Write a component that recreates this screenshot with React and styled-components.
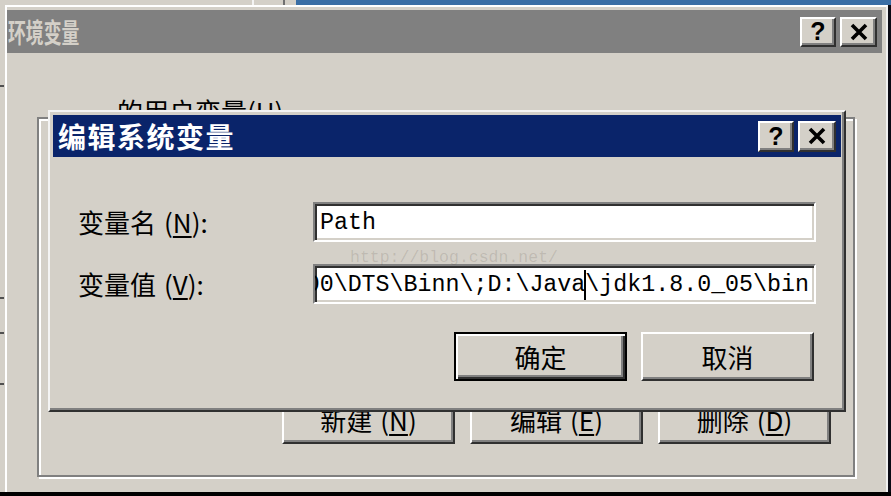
import React from 'react';
import styled, { createGlobalStyle } from 'styled-components';

const GlobalStyle = createGlobalStyle`
  html, body {
    margin: 0;
    padding: 0;
    background: #000;
  }
  body {
    width: 891px;
    height: 496px;
    overflow: hidden;
  }
  * {
    box-sizing: border-box;
  }
`;

const cjk = `"Noto Sans CJK SC", "Noto Sans", sans-serif`;
const mono = `"Liberation Mono", "DejaVu Sans Mono", monospace`;

// 背景（桌面和后面的窗口）
const Desktop = styled.div`
  width: 891px;
  height: 496px;
  display: flex;
  flex-direction: column;
  background: #d4d0c8;
  overflow: hidden;
  font-family: ${cjk};
`;

const TopStrip = styled.div`
  height: 5px;
  flex-shrink: 0;
  display: flex;
`;

const BehindBar = styled.div`
  width: 296px;
  display: flex;
  background: #d4d0c8;
`;

const Spacer = styled.div`
  width: ${(p) => p.w}px;
`;

const VLine = styled.div`
  width: 2px;
  background: ${(p) => p.color};
`;

const BlueBar = styled.div`
  flex: 1;
  background: #3a6ea5;
`;

const Middle = styled.div`
  flex: 1;
  display: flex;
  min-height: 0;
`;

const LeftEdge = styled.div`
  width: 5px;
  display: flex;
  flex-direction: column;
  background: #d4d0c8;
`;

const Dash = styled.div`
  width: 4px;
  height: 2px;
  background: #505050;
  margin-top: ${(p) => p.gap}px;
`;

const RightEdge = styled.div`
  width: 3px;
  background: #0a0a14;
`;

const BottomStrip = styled.div`
  height: 4px;
  flex-shrink: 0;
  background: #000;
`;

// 窗口
const OuterWindow = styled.div`
  position: relative;
  flex: 1;
  display: flex;
  flex-direction: column;
  background: #d4d0c8;
  border-left: 2px solid #fff;
  border-top: 2px solid #fff;
  border-right: 2px solid #f0f0f0;
  padding: 3px 4px 0 0;
`;

const InnerWindow = styled.div`
  position: absolute;
  left: 41px;
  top: 103px;
  width: 798px;
  height: 302px;
  display: flex;
  flex-direction: column;
  background: #d4d0c8;
  border: 2px solid;
  border-color: #f4f4f4 #303030 #303030 #f4f4f4;
  box-shadow: inset -2px -2px 0 #808080;
  padding: 3px;
  z-index: 2;
`;

const TitleBar = styled.div`
  height: ${(p) => p.h}px;
  flex-shrink: 0;
  display: flex;
  align-items: center;
  background: ${(p) => (p.active ? '#0a246a' : '#808080')};
  padding: 0 5px 0 ${(p) => (p.active ? 5 : 1)}px;
`;

const TitleText = styled.div`
  flex: 1;
  font-family: ${cjk};
  font-weight: 700;
  font-size: ${(p) => (p.active ? 28 : 27)}px;
  letter-spacing: ${(p) => (p.active ? 1.5 : 0)}px;
  color: ${(p) => (p.active ? '#ffffff' : '#d4d0c8')};
  white-space: nowrap;
  transform: scaleX(${(p) => (p.active ? 1 : 0.66)});
  transform-origin: left center;
`;

const TitleButtons = styled.div`
  display: flex;
  gap: 4px;
`;

const TitleButton = styled.div`
  width: ${(p) => p.w}px;
  height: ${(p) => p.h}px;
  display: flex;
  align-items: center;
  justify-content: center;
  background: #d4d0c8;
  border: 2px solid;
  border-color: #fff #303030 #303030 #fff;
  box-shadow: inset -2px -2px 0 #808080;
  font-family: "Liberation Sans", Arial, sans-serif;
  font-weight: 700;
  font-size: 25px;
  line-height: 1;
  color: #000;
`;

// 分组框
const GroupBox = styled.div`
  flex: 1;
  display: flex;
  flex-direction: column;
  margin: 64px 27px 15px 30px;
  border: 2px solid #808080;
  box-shadow: inset 2px 2px 0 #fff, 2px 2px 0 #fff;
`;

const GroupLabel = styled.div`
  align-self: flex-start;
  margin: -23px 0 0 76px;
  padding: 0 2px;
  background: #d4d0c8;
  font-size: 26px;
  line-height: 30px;
  color: #000;
`;

const ButtonRow = styled.div`
  margin-top: auto;
  display: flex;
  justify-content: flex-end;
  gap: ${(p) => p.gap}px;
  padding: 0 ${(p) => p.right}px ${(p) => p.bottom}px 0;
`;

const Button = styled.div`
  width: 173px;
  height: 49px;
  display: flex;
  align-items: center;
  justify-content: center;
  background: #d4d0c8;
  font-family: ${cjk};
  font-size: 26px;
  color: #000;
  border: 2px solid;
  border-color: ${(p) => (p.primary ? '#000' : '#fff #303030 #303030 #fff')};
  box-shadow: ${(p) =>
    p.primary
      ? 'inset 2px 2px 0 #fff, inset -2px -2px 0 #303030, inset -4px -4px 0 #808080'
      : 'inset -2px -2px 0 #808080'};
`;

const Key = styled.span`
  text-decoration: underline;
  text-underline-offset: 3px;
`;

// 编辑对话框内容
const Form = styled.div`
  display: grid;
  grid-template-columns: 235px 503px;
  row-gap: 22px;
  align-items: center;
  padding: 45px 0 0 25px;
`;

const FieldLabel = styled.div`
  font-size: 26px;
  line-height: 30px;
  color: #000;
  white-space: nowrap;
`;

const Paren = styled.span`
  margin-left: 8px;
`;

const Edit = styled.div`
  height: 40px;
  display: flex;
  align-items: center;
  justify-content: ${(p) => (p.end ? 'flex-end' : 'flex-start')};
  overflow: hidden;
  background: #fff;
  border: 2px solid;
  border-color: #808080 #fff #fff #808080;
  box-shadow: inset 2px 2px 0 #303030, inset -2px -2px 0 #d4d0c8;
  padding: 2px 5px 0 5px;
  font-family: ${mono};
  font-size: 23.3px;
  color: #000;
`;

const EditText = styled.span`
  flex-shrink: 0;
  white-space: pre;
  display: flex;
  align-items: center;
`;

const Caret = styled.span`
  display: inline-block;
  width: 2px;
  height: 30px;
  margin: 0 -1px;
  background: #000;
`;

const Watermark = styled.div`
  position: absolute;
  left: 300px;
  top: 136px;
  font-family: ${mono};
  font-size: 16.5px;
  color: rgba(80, 70, 60, 0.16);
  white-space: nowrap;
  pointer-events: none;
`;

function CloseGlyph() {
  return (
    <svg width="20" height="18" viewBox="0 0 20 18">
      <path d="M3 2 L17 16 M17 2 L3 16" stroke="#000" strokeWidth="3.6" fill="none" />
    </svg>
  );
}

function App() {
  return (
    <>
      <GlobalStyle />
      <Desktop>
        <TopStrip>
          <BehindBar>
            <Spacer w={252} />
            <VLine color="#f4f4f4" />
            <Spacer w={29} />
            <VLine color="#707070" />
          </BehindBar>
          <BlueBar />
        </TopStrip>
        <Middle>
          <LeftEdge>
            <Dash gap={80} />
            <Dash gap={210} />
            <Dash gap={33} />
            <Dash gap={49} />
          </LeftEdge>
          <OuterWindow>
            <TitleBar h={43}>
              <TitleText>环境变量</TitleText>
              <TitleButtons>
                <TitleButton w={36} h={30}>?</TitleButton>
                <TitleButton w={37} h={30}>
                  <CloseGlyph />
                </TitleButton>
              </TitleButtons>
            </TitleBar>
            <GroupBox>
              <GroupLabel>的用户变量(U)</GroupLabel>
              <ButtonRow gap={15} right={22} bottom={31}>
                <Button>
                  新建<Paren>(</Paren><Key>N</Key>)
                </Button>
                <Button>
                  编辑<Paren>(</Paren><Key>E</Key>)
                </Button>
                <Button>
                  删除<Paren>(</Paren><Key>D</Key>)
                </Button>
              </ButtonRow>
            </GroupBox>

            <InnerWindow>
              <TitleBar h={42} active>
                <TitleText active>编辑系统变量</TitleText>
                <TitleButtons>
                  <TitleButton w={36} h={31}>?</TitleButton>
                  <TitleButton w={38} h={31}>
                    <CloseGlyph />
                  </TitleButton>
                </TitleButtons>
              </TitleBar>
              <Form>
                <FieldLabel>
                  变量名<Paren>(</Paren><Key>N</Key>):
                </FieldLabel>
                <Edit>
                  <EditText>Path</EditText>
                </Edit>
                <FieldLabel>
                  变量值<Paren>(</Paren><Key>V</Key>):
                </FieldLabel>
                <Edit end>
                  <EditText>
                    {'Server\\100\\DTS\\Binn\\;D:\\Java'}
                    <Caret />
                    {'\\jdk1.8.0_05\\bin'}
                  </EditText>
                </Edit>
              </Form>
              <ButtonRow gap={14} right={27} bottom={26}>
                <Button primary>确定</Button>
                <Button>取消</Button>
              </ButtonRow>
              <Watermark>http://blog.csdn.net/</Watermark>
            </InnerWindow>
          </OuterWindow>
          <RightEdge />
        </Middle>
        <BottomStrip />
      </Desktop>
    </>
  );
}

export default App;
